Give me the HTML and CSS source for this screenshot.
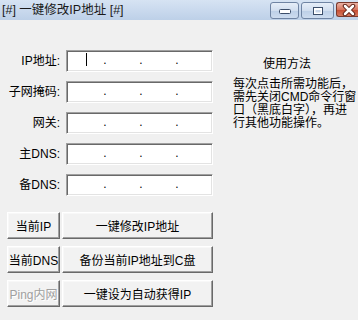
FILE: index.html
```html
<html>

<head>
  <meta content="text/html;charset=utf-8" http-equiv="Content-Type" />
  <link rel="stylesheet" href="styles.css">
</head>

<body>
  <div class="titlebar">
    <span class="title">[#] 一键修改IP地址 [#]</span>
    <div class="spacer"></div>
    <div class="ctl min">
      <svg width="14" height="8" viewBox="0 0 14 8"><rect x="1.5" y="2.5" width="11" height="4" rx="1" fill="#fff" stroke="#3c4e6a" /></svg>
    </div>
    <div class="ctl max">
      <svg width="12" height="10" viewBox="0 0 12 10"><rect x="1.5" y="1.5" width="9" height="7" fill="#fff" stroke="#3c4e6a" /><rect x="3.5" y="4" width="5" height="2.5" fill="#c9d7ea" /></svg>
    </div>
    <div class="ctl close">
      <svg width="16" height="12" viewBox="0 0 16 12">
        <path d="M4 2 L12 10 M12 2 L4 10" stroke="#5a1e14" stroke-width="4.5" stroke-linecap="round" />
        <path d="M4 2 L12 10 M12 2 L4 10" stroke="#fff" stroke-width="2.5" stroke-linecap="round" />
      </svg>
    </div>
  </div>

  <div class="client">
    <div class="left">
      <div class="fields">
        <label>IP地址:</label>
        <div class="ipbox"><i class="caret"></i><span>.</span><span>.</span><span>.</span></div>

        <label>子网掩码:</label>
        <div class="ipbox"><span>.</span><span>.</span><span>.</span></div>

        <label>网关:</label>
        <div class="ipbox"><span>.</span><span>.</span><span>.</span></div>

        <label>主DNS:</label>
        <div class="ipbox"><span>.</span><span>.</span><span>.</span></div>

        <label>备DNS:</label>
        <div class="ipbox"><span>.</span><span>.</span><span>.</span></div>
      </div>

      <div class="buttons">
        <button>当前IP</button>
        <button>一键修改IP地址</button>
        <button>当前DNS</button>
        <button>备份当前IP地址到C盘</button>
        <button class="disabled">Ping内网</button>
        <button>一键设为自动获得IP</button>
      </div>
    </div>

    <div class="help">
      <div class="heading">使用方法</div>
      <p>每次点击所需功能后，<br>需先关闭CMD命令行窗<br>口（黑底白字），再进<br>行其他功能操作。</p>
    </div>
  </div>
</body>

</html>
```

FILE: styles.css
```css
html {
  margin: 0;
  font-size: 12px;
  font-family: "Liberation Sans", "Noto Sans CJK SC", sans-serif;
}

body {
  margin: 0;
  width: 358px;
  height: 320px;
  overflow: hidden;
  background-color: #f0f0f0;
  color: #000;
}

.titlebar {
  display: flex;
  align-items: flex-start;
  height: 20px;
  background: linear-gradient(#d6e3f3, #bdd0e8);
  overflow: hidden;
}

.title {
  margin-left: 2px;
  line-height: 21px;
  font-size: 12.5px;
  color: #1a1a1a;
}

.spacer {
  flex-grow: 1;
}

.ctl {
  display: flex;
  align-items: center;
  justify-content: center;
  height: 15px;
  margin-top: 2px;
  border: 1px solid #6f84a3;
  border-radius: 3px;
  background: linear-gradient(#e6eef8 0%, #d1deef 50%, #bccfe7 51%, #cddcef 100%);
}

.min {
  width: 27px;
}

.max {
  width: 31px;
  margin-left: 2px;
}

.close {
  width: 22px;
  margin-left: 2px;
  border-color: #7a3a2e;
  border-right: none;
  border-radius: 3px 0 0 3px;
  background: linear-gradient(#eab2a4 0%, #d7755f 50%, #c44a30 51%, #d6785e 100%);
  justify-content: flex-start;
  padding-left: 4px;
  box-sizing: border-box;
}

.client {
  display: flex;
  padding: 30px 0 0 7px;
}

.fields {
  display: grid;
  grid-template-columns: 53px 147px;
  grid-auto-rows: 22px;
  column-gap: 6px;
  row-gap: 9px;
}

.fields label {
  text-align: right;
  line-height: 22px;
  white-space: nowrap;
}

.ipbox {
  position: relative;
  display: flex;
  padding-left: 20px;
  background-color: #fff;
  border: 1px solid;
  border-color: #a0a0a0 #ffffff #ffffff #a0a0a0;
  box-shadow: inset 1px 1px #696969, inset -1px -1px #e3e3e3;
  box-sizing: border-box;
  line-height: 18px;
}

.ipbox span {
  width: 36px;
  text-align: center;
}

.caret {
  position: absolute;
  left: 19px;
  top: 2px;
  width: 1px;
  height: 13px;
  background-color: #000;
}

.buttons {
  display: grid;
  grid-template-columns: 53px 151px;
  grid-auto-rows: 27px;
  column-gap: 2px;
  row-gap: 7px;
  margin-top: 16px;
}

button {
  margin: 0;
  padding: 0;
  font-family: inherit;
  font-size: 12px;
  color: #000;
  background-color: #f2f2f2;
  border: 1px solid;
  border-color: #ffffff #696969 #696969 #ffffff;
  box-shadow: inset -1px -1px #a0a0a0, inset 1px 1px #f8f8f8;
  white-space: nowrap;
}

button.disabled {
  color: #a0a0a0;
  text-shadow: 1px 1px #fff;
}

.help {
  margin-left: 20px;
  padding-top: 8px;
  width: 125px;
}

.heading {
  padding-left: 30px;
  line-height: 13px;
}

.help p {
  margin: 7px 0 0 0;
  line-height: 13px;
  white-space: nowrap;
}
```
